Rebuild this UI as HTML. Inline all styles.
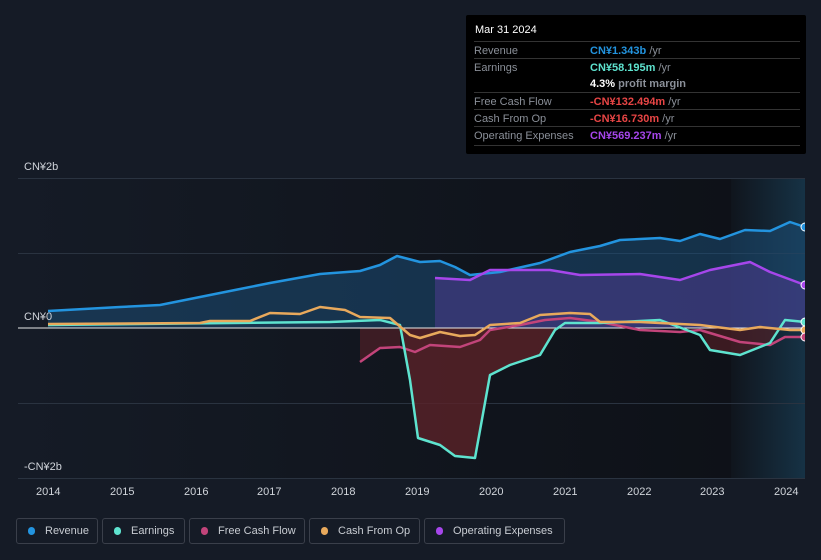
<!DOCTYPE html>
<html><head><meta charset="utf-8"><style>
body{margin:0;width:821px;height:560px;background:#151b26;font-family:"Liberation Sans",sans-serif;overflow:hidden;position:relative}
.tt{position:absolute;left:466px;top:15px;width:340px;height:139px;background:#000;border-radius:2px;font-size:11px;color:#8a8f98}
.tt .h{position:absolute;left:9px;top:9px;color:#fff;font-size:11px}
.row{position:absolute;left:8px;width:326px;border-top:1px solid #333}
.row span{position:absolute;left:0;top:3px}
.row b{position:absolute;left:116px;top:3px;font-weight:bold}
.lg{position:absolute;top:518px;height:26px;border:1px solid #3a3f4a;border-radius:3px;font-size:11px;color:#c8ccd2;box-sizing:border-box;line-height:24px;padding-left:28px}
.lg i{position:absolute;left:11px;top:8px;width:7px;height:8px;border-radius:4px}
.ax{position:absolute;font-size:11px;color:#d0d4da}
</style></head><body>
<svg width="821" height="560" style="position:absolute;left:0;top:0">
<defs><linearGradient id="pb" x1="0" x2="1"><stop offset="0" stop-color="#151b26"/><stop offset="1" stop-color="#0d1016"/></linearGradient>
<linearGradient id="fc" x1="0" x2="1"><stop offset="0" stop-color="#10151d"/><stop offset="1" stop-color="#163245"/></linearGradient></defs>
<rect x="18" y="178" width="787" height="300" fill="url(#pb)"/>
<rect x="731" y="178" width="74" height="300" fill="url(#fc)"/>
<g stroke="#2a3340" stroke-width="1"><line x1="18" y1="178.5" x2="805" y2="178.5"/><line x1="18" y1="253.5" x2="805" y2="253.5"/><line x1="18" y1="403.5" x2="805" y2="403.5"/><line x1="18" y1="478.5" x2="805" y2="478.5"/></g>
<path d="M48,311 L120,307 L160,305 L200,297 L235,290 L270,283 L320,274 L360,271 L380,265 L397,256 L420,262 L440,261 L455,267 L470,275 L500,272 L540,263 L570,252 L600,246 L620,240 L660,238 L680,241 L700,234 L720,239 L745,230 L770,231 L790,222 L805,227 L805,328 L48,328Z" fill="#1b4d74" opacity="0.55"/>
<path d="M435,278 L470,280 L490,270 L550,270 L580,275 L640,274 L680,280 L710,270 L750,262 L770,272 L805,285 L805,328 L435,328Z" fill="#4a3a8a" opacity="0.6"/>
<path d="M400,328 L410,380 L418,438 L440,445 L455,456 L475,458 L490,375 L510,365 L540,355 L555,328Z" fill="#5a2228" opacity="0.8"/>
<path d="M360,328 L360,362 L380,348 L400,347 L400,328Z" fill="#5a2228" opacity="0.6"/>
<path d="M700,328 L710,350 L740,355 L770,343 L780,328Z" fill="#5a2228" opacity="0.6"/>
<line x1="18" y1="328" x2="805" y2="328" stroke="#e8e8e8" stroke-width="1"/>
<g fill="none" stroke-width="2.5" stroke-linejoin="round">
<path stroke="#2394df" d="M48,311 L120,307 L160,305 L200,297 L235,290 L270,283 L320,274 L360,271 L380,265 L397,256 L420,262 L440,261 L455,267 L470,275 L500,272 L540,263 L570,252 L600,246 L620,240 L660,238 L680,241 L700,234 L720,239 L745,230 L770,231 L790,222 L805,227"/>
<path stroke="#a646eb" d="M435,278 L470,280 L490,270 L550,270 L580,275 L640,274 L680,280 L710,270 L750,262 L770,272 L805,285"/>
<path stroke="#c2447a" d="M360,362 L380,348 L400,347 L415,352 L430,345 L460,347 L480,340 L490,330 L520,325 L545,320 L570,318 L600,322 L640,330 L680,332 L700,330 L740,342 L770,345 L785,337 L805,337"/>
<path stroke="#5ee3cf" d="M48,325 L330,322 L380,320 L400,325 L410,380 L418,438 L440,445 L455,456 L475,458 L490,375 L510,365 L540,355 L555,330 L565,323 L600,323 L660,320 L700,335 L710,350 L740,355 L770,343 L785,320 L805,322"/>
<path stroke="#e8a95c" d="M48,324 L200,323 L210,321 L250,321 L270,313 L300,314 L320,307 L345,310 L360,317 L390,318 L410,335 L420,338 L440,332 L460,336 L475,335 L490,325 L520,323 L540,315 L570,313 L590,314 L600,322 L640,322 L680,324 L700,325 L740,330 L760,327 L790,330 L805,330"/>
</g>
<g stroke="#fff" stroke-width="1">
<circle cx="805" cy="227" r="4" fill="#2394df"/><circle cx="805" cy="285" r="4" fill="#a646eb"/>
<circle cx="805" cy="322" r="4" fill="#5ee3cf"/><circle cx="805" cy="330" r="4" fill="#e8a95c"/><circle cx="805" cy="337" r="4" fill="#c2447a"/></g>
<rect x="805" y="170" width="16" height="320" fill="#151b26"/>
</svg>
<div class="ax" style="left:24px;top:161px">CN¥2b</div>
<div class="ax" style="left:24px;top:311px">CN¥0</div>
<div class="ax" style="left:24px;top:461px">-CN¥2b</div>
<div class="ax" style="left:36px;top:486px">2014</div><div class="ax" style="left:110px;top:486px">2015</div><div class="ax" style="left:184px;top:486px">2016</div><div class="ax" style="left:257px;top:486px">2017</div><div class="ax" style="left:331px;top:486px">2018</div><div class="ax" style="left:405px;top:486px">2019</div><div class="ax" style="left:479px;top:486px">2020</div><div class="ax" style="left:553px;top:486px">2021</div><div class="ax" style="left:627px;top:486px">2022</div><div class="ax" style="left:700px;top:486px">2023</div><div class="ax" style="left:774px;top:486px">2024</div>
<div class="tt"><div class="h">Mar 31 2024</div>
<div class="row" style="top:26px"><span>Revenue</span><b style="color:#2394df">CN¥1.343b <span style="position:static;color:#8a8f98;font-weight:normal">/yr</span></b></div>
<div class="row" style="top:43px"><span>Earnings</span><b style="color:#5ee3cf">CN¥58.195m <span style="position:static;color:#8a8f98;font-weight:normal">/yr</span></b></div>
<div class="row" style="top:60px;border:0"><b style="color:#fff">4.3% <span style="position:static;color:#8a8f98">profit margin</span></b></div>
<div class="row" style="top:77px"><span>Free Cash Flow</span><b style="color:#e84545">-CN¥132.494m <span style="position:static;color:#8a8f98;font-weight:normal">/yr</span></b></div>
<div class="row" style="top:94px"><span>Cash From Op</span><b style="color:#e84545">-CN¥16.730m <span style="position:static;color:#8a8f98;font-weight:normal">/yr</span></b></div>
<div class="row" style="top:111px"><span>Operating Expenses</span><b style="color:#a646eb">CN¥569.237m <span style="position:static;color:#8a8f98;font-weight:normal">/yr</span></b></div>
<div class="row" style="top:130px"></div>
</div>
<div class="lg" style="left:16px;width:82px"><i style="background:#2394df"></i>Revenue</div>
<div class="lg" style="left:102px;width:83px"><i style="background:#5ee3cf"></i>Earnings</div>
<div class="lg" style="left:189px;width:116px"><i style="background:#c2447a"></i>Free Cash Flow</div>
<div class="lg" style="left:309px;width:111px"><i style="background:#e8a95c"></i>Cash From Op</div>
<div class="lg" style="left:424px;width:141px"><i style="background:#a646eb"></i>Operating Expenses</div>
</body></html>
